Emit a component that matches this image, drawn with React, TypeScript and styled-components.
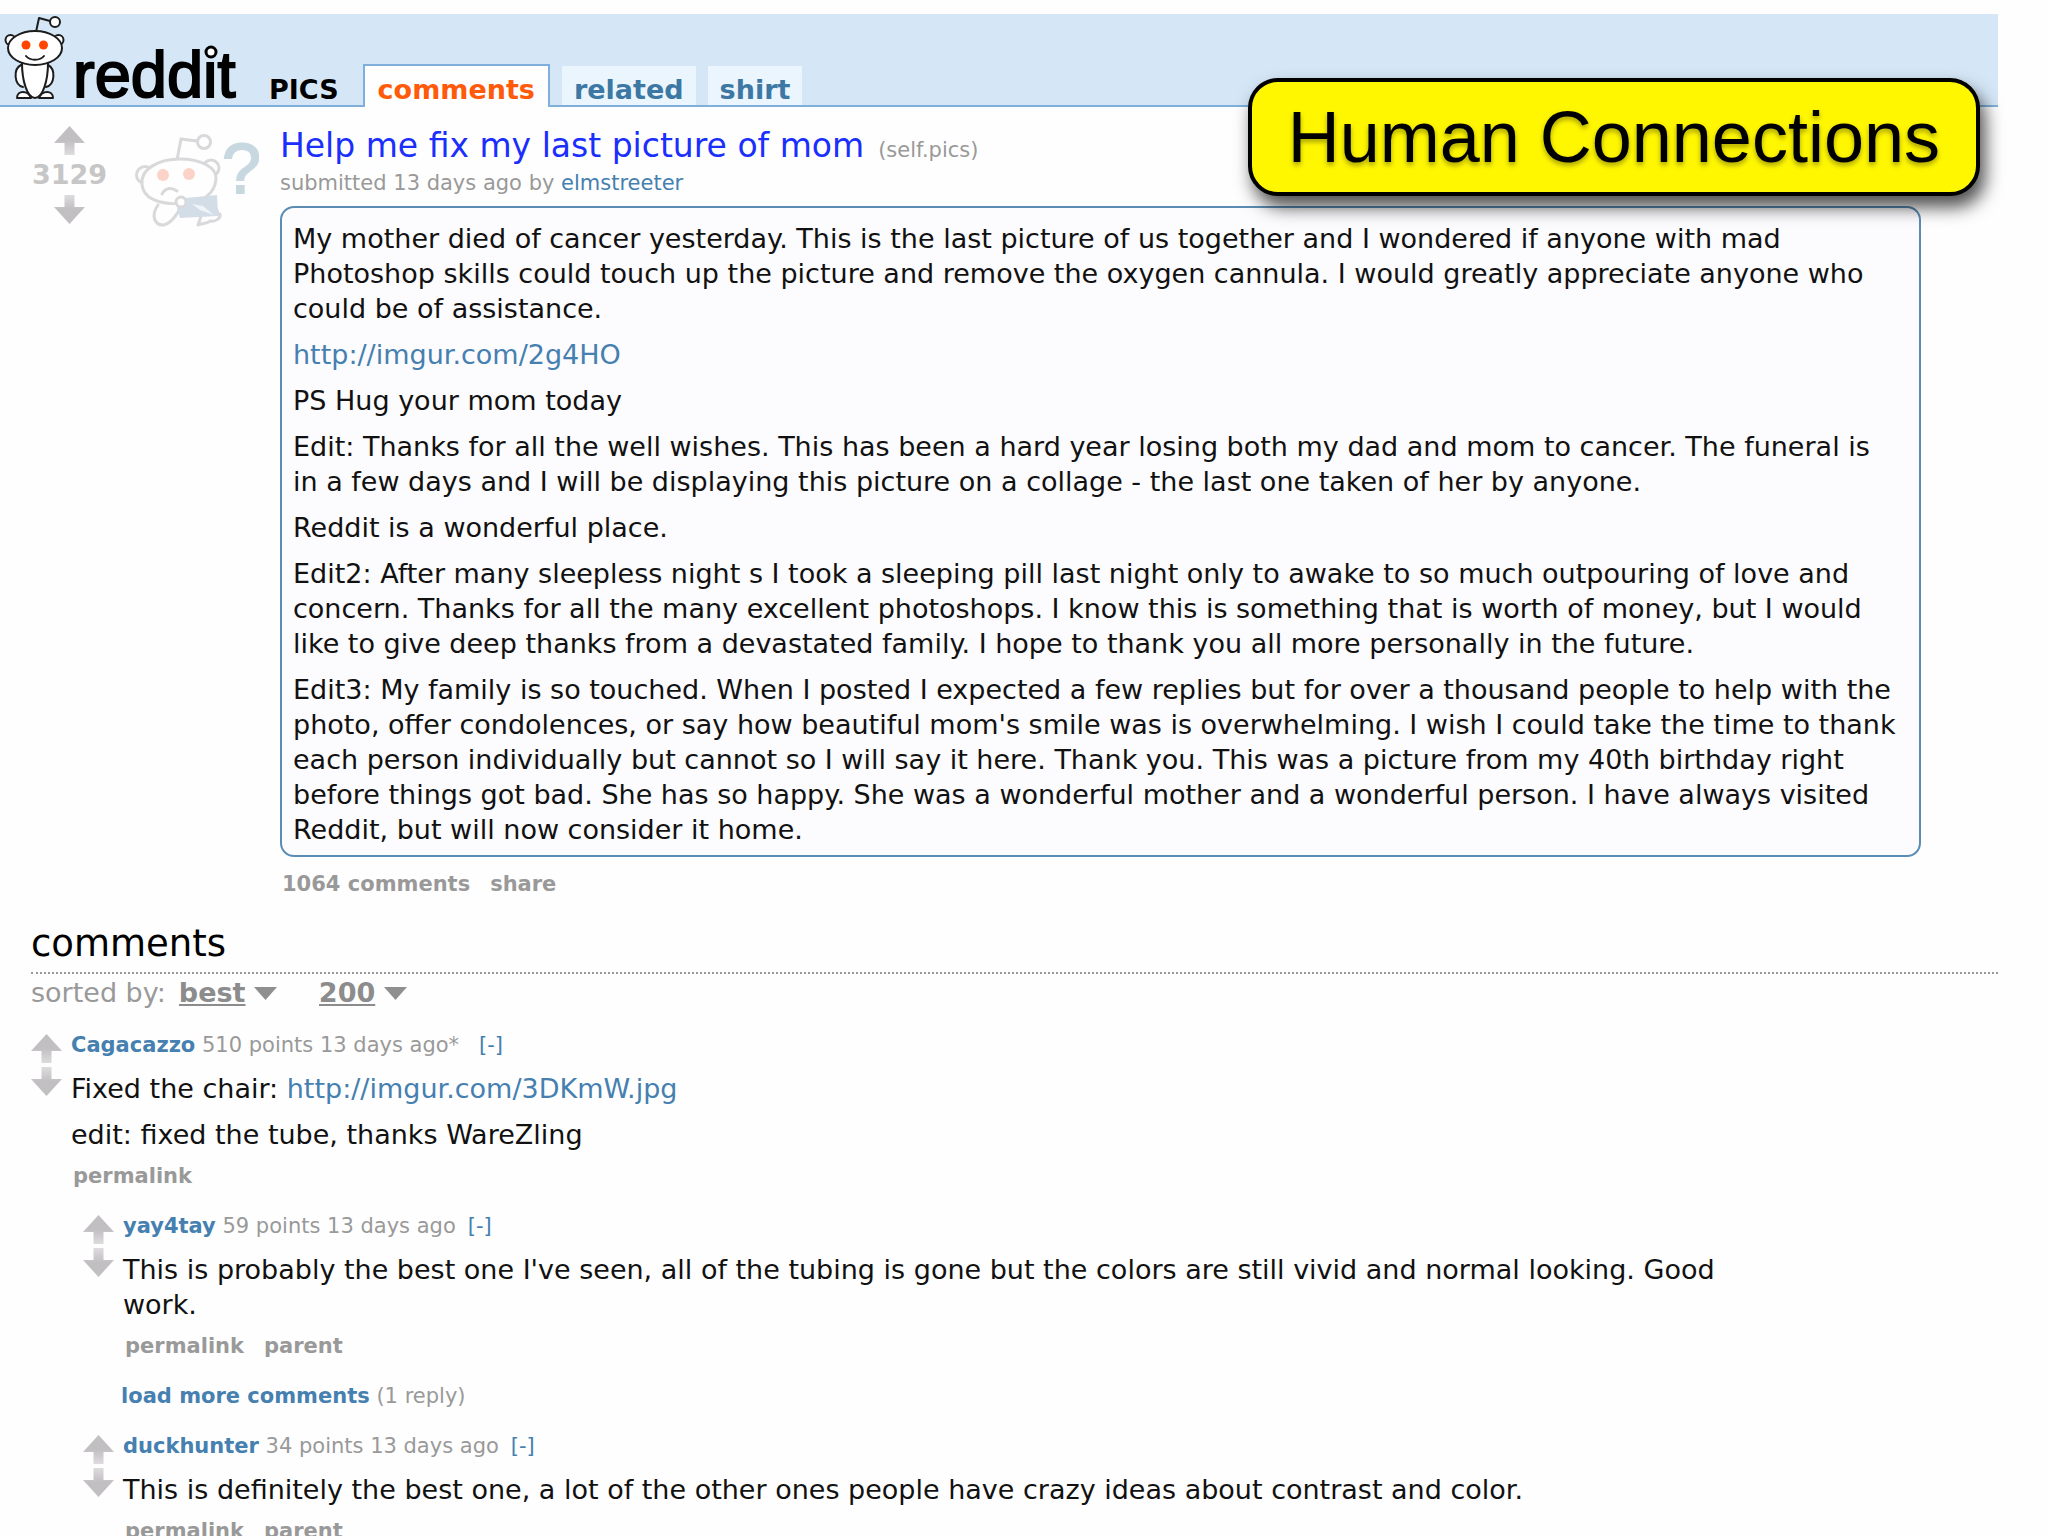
import React from "react";
import styled, { createGlobalStyle, css } from "styled-components";

const LINK = "#4580b0";
const MUTED = "#999999";

const GlobalStyle = createGlobalStyle`
  * { box-sizing: border-box; }
  body {
    margin: 0;
    background: #fefefe;
    color: #111;
    font-family: "DejaVu Sans", Verdana, sans-serif;
    font-size: 27px;
    line-height: 35px;
  }
  h1, h2, p, ul { margin: 0; padding: 0; font-weight: normal; }
  button { border: 0; padding: 0; background: none; font: inherit; cursor: pointer; }
`;

const Page = styled.div`
  position: relative;
  height: 100vh;
  overflow: hidden;
  padding: 14px 50px 0 0;
`;

const Header = styled.header`
  display: flex;
  align-items: flex-end;
  height: 93px;
  background: #d5e7f7;
  border-bottom: 2px solid #7fb0dc;
`;

const Logo = styled.a`
  display: flex;
  align-items: flex-end;
  width: 269px;
  height: 91px;
  color: #000;
  text-decoration: none;
`;

const Wordmark = styled.span`
  position: relative;
  font-family: "Liberation Sans", Arial, sans-serif;
  font-size: 65px;
  line-height: 60px;
  -webkit-text-stroke: 2px #000;
`;

const WordmarkDot = styled.svg`
  position: absolute;
  right: 18px;
  top: 0;
`;

const HeaderNav = styled.nav`
  display: flex;
  align-items: flex-end;
  gap: 12px;
  font-weight: bold;
  line-height: 31px;
`;

const SubredditName = styled.a`
  color: #000;
  text-decoration: none;
  margin-right: 12px;
`;

const Tab = styled.a<{ $active?: boolean }>`
  padding: 8px 12px 0;
  background: #ebf5fd;
  color: #3c78a3;
  text-decoration: none;
  ${(p) =>
    p.$active &&
    css`
      padding: 8px 13px 2px;
      margin-bottom: -2px;
      border: 2px solid #7fb0dc;
      border-bottom: 0;
      background: #fefefe;
      color: #ff5a0a;
    `}
`;

const Callout = styled.aside`
  position: absolute;
  top: 78px;
  right: 68px;
  padding: 0 36px;
  border: 4px solid #000;
  border-radius: 30px;
  background: #fff700;
  color: #000;
  font-family: "Liberation Sans", Helvetica, sans-serif;
  font-size: 72px;
  line-height: 110px;
  white-space: nowrap;
  text-shadow: 0 3px 5px rgba(0, 0, 0, 0.35);
  box-shadow: 5px 11px 18px rgba(0, 0, 0, 0.7);
`;

const Post = styled.article`
  display: flex;
  align-items: flex-start;
  padding: 19px 77px 0 31px;
`;

const PostVotes = styled.div`
  display: flex;
  flex-direction: column;
  align-items: center;
  width: 77px;
`;

const Score = styled.span`
  color: #c6c6c6;
  font-weight: bold;
  line-height: 40px;
`;

const VoteButton = styled.button`
  display: block;
  width: 31px;
  height: 29px;
  svg { display: block; }
`;

const Thumbnail = styled.a`
  flex: none;
  width: 124px;
  margin: 8px 21px 0 27px;
  svg { display: block; }
`;

const PostBody = styled.div`
  flex: 1;
  min-width: 0;
`;

const PostTitle = styled.h1`
  font-size: 33px;
  line-height: 40px;
  a { color: #1a2ffb; text-decoration: none; }
`;

const Domain = styled.span`
  margin-left: 14px;
  color: ${MUTED};
  font-size: 21px;
`;

const Small = styled.p`
  color: ${MUTED};
  font-size: 21px;
  line-height: 26px;
`;

const TextLink = styled.a<{ $bold?: boolean }>`
  color: ${LINK};
  font-weight: ${(p) => (p.$bold ? "bold" : "normal")};
  text-decoration: none;
`;

const Prose = styled.div`
  display: flex;
  flex-direction: column;
  gap: 11px;
`;

const SelfText = styled(Prose)`
  margin-top: 10px;
  padding: 13px 20px 8px 11px;
  border: 2px solid #5b8db4;
  border-radius: 14px;
  background: #fcfbfd;
`;

const ActionList = styled.ul`
  display: flex;
  gap: 20px;
  padding-left: 2px;
  list-style: none;
  font-size: 21px;
  font-weight: bold;
  line-height: 26px;
  a { color: ${MUTED}; text-decoration: none; }
`;

const PostActions = styled(ActionList)`
  margin-top: 14px;
`;

const Discussion = styled.section`
  margin: 25px 0 0 31px;
`;

const DiscussionTitle = styled.h2`
  padding-bottom: 6px;
  border-bottom: 2px dotted #999;
  color: #000;
  font-size: 37px;
  line-height: 44px;
`;

const SortBar = styled.div`
  display: flex;
  align-items: baseline;
  margin-top: 3px;
  color: ${MUTED};
  line-height: 32px;
`;

const SortField = styled.span`
  display: flex;
  align-items: center;
  gap: 8px;
  margin: 0 29px 0 13px;
`;

const SortSelect = styled.select`
  appearance: none;
  margin: 0;
  padding: 0;
  border: 0;
  background: none;
  color: #8c8c8c;
  font: inherit;
  font-weight: bold;
  text-decoration: underline 2px;
  text-underline-offset: 2px;
`;

const CommentRow = styled.article`
  display: flex;
  align-items: flex-start;
  gap: 9px;
`;

const CommentVotes = styled.div`
  display: flex;
  flex-direction: column;
  gap: 4px;
  padding-top: 2px;
`;

const CommentBody = styled.div`
  flex: 1;
  min-width: 0;
`;

const CommentText = styled(Prose)`
  max-width: 1650px;
  margin: 13px 0 11px;
`;

const CollapseButton = styled.button<{ $spaced?: boolean }>`
  margin-left: ${(p) => (p.$spaced ? 20 : 12)}px;
  color: ${LINK};
`;

const Thread = styled.div`
  margin-top: 23px;
`;

const Replies = styled.div`
  display: flex;
  flex-direction: column;
  gap: 24px;
  margin-top: 24px;
  padding-left: 12px;
`;

const LoadMore = styled(Small)`
  padding-left: 38px;
`;

const VoteArrow = ({ down }: { down?: boolean }) => (
  <svg width="31" height="29" viewBox="0 0 31 29" aria-hidden="true">
    <defs>
      <linearGradient id="arrowFade" x1="0" y1="0" x2="0" y2="1">
        <stop offset="0.5" stopColor="#c1bfc2" />
        <stop offset="1" stopColor="#dddbde" />
      </linearGradient>
    </defs>
    <path
      d="M15.500 0 L31 17 H20.500 V29 H10.500 V17 H0 Z"
      fill="url(#arrowFade)"
      transform={down ? "rotate(180 15.500 14.500)" : undefined}
    />
  </svg>
);

const Caret = () => (
  <svg width="23" height="13" viewBox="0 0 23 13" aria-hidden="true">
    <path d="M0 0 H23 L11.500 13 Z" fill="#8f8f8f" />
  </svg>
);

const AlienLogo = () => (
  <svg width="73" height="91" viewBox="0 14 73 91" aria-hidden="true">
    <g fill="#fff" stroke="#1c1c1c" strokeWidth="2" strokeLinecap="round" strokeLinejoin="round">
      <path d="M36 32 L39 18 L50 21" fill="none" />
      <circle cx="55" cy="22" r="5" />
      <circle cx="10.500" cy="40" r="5" />
      <circle cx="58.500" cy="40" r="5" />
      <path d="M21 65 C13 69 14 85 23 87" />
      <path d="M48 65 C56 69 55 85 46 87" />
      <path d="M17 98 C17 90 28 90 31 98 Z" />
      <path d="M39 98 C42 90 53 90 53 98 Z" />
      <path d="M22 63 C22 80 27 98 35 98 C43 98 48 80 48 63 Z" />
      <ellipse cx="35" cy="48" rx="27" ry="17" />
      <path d="M26 56 C30 61 40 61 44 56" fill="none" />
    </g>
    <circle cx="26" cy="45" r="4.500" fill="#ff4500" />
    <circle cx="43.500" cy="45" r="4.500" fill="#ff4500" />
  </svg>
);

const ConfusedAlien = () => (
  <svg width="124" height="93" viewBox="135 133 124 93" role="img" aria-label="self post">
    <g fill="#fefefe" stroke="#d9d8da" strokeWidth="3" strokeLinecap="round" strokeLinejoin="round">
      <path d="M177 159 L181 138 L197 140" fill="none" />
      <circle cx="204" cy="141" r="6.500" />
      <circle cx="145" cy="174" r="8.500" />
      <circle cx="211" cy="167" r="8" />
      <path d="M142 184 C140 167 160 158 180 158 C200 158 217 166 216 178 C215 192 203 203 180 203 C160 203 144 199 142 184 Z" />
      <path d="M162 193 C165 187 171 186 177 190" fill="none" />
      <path d="M158 204 C151 214 154 224 163 224 C172 223 178 212 182 204" />
      <path d="M201 215 L198 224 C203 221 206 224 210 220 C216 221 221 217 220 213 C216 215 219 208 215 207" />
    </g>
    <path d="M186 197 L217 194 L218 215 L180 217 L177 207 Z" fill="#d3dde8" />
    <path d="M192 203 L203 205 L214 214 L200 209 Z" fill="#eef4f8" />
    <circle cx="181" cy="201" r="5" fill="#fefefe" stroke="#d9d8da" strokeWidth="3" />
    <circle cx="163" cy="174" r="6" fill="#fbd3c8" />
    <circle cx="189" cy="173" r="6" fill="#fbd3c8" />
    <text x="224" y="192" fill="#c8d8e0" stroke="#c8d8e0" strokeWidth="2" fontFamily="Liberation Sans, sans-serif" fontSize="70" textAnchor="start" dx="-2">?</text>
  </svg>
);

type CommentProps = {
  author: string;
  meta: string;
  edited?: boolean;
  actions: string[];
  replies?: React.ReactNode;
  children: React.ReactNode;
};

const Actions = ({ items }: { items: string[] }) => (
  <ActionList>
    {items.map((item) => (
      <li key={item}>
        <a href="#">{item}</a>
      </li>
    ))}
  </ActionList>
);

const Comment = ({ author, meta, edited, actions, replies, children }: CommentProps) => (
  <CommentRow>
    <CommentVotes>
      <VoteButton type="button" aria-label="upvote"><VoteArrow /></VoteButton>
      <VoteButton type="button" aria-label="downvote"><VoteArrow down /></VoteButton>
    </CommentVotes>
    <CommentBody>
      <Small>
        <TextLink href="#" $bold>{author}</TextLink> {meta}
        <CollapseButton type="button" $spaced={edited}>[-]</CollapseButton>
      </Small>
      <CommentText>{children}</CommentText>
      <Actions items={actions} />
      {replies && <Replies>{replies}</Replies>}
    </CommentBody>
  </CommentRow>
);

const SortControl = ({ label, value }: { label: string; value: string }) => (
  <SortField>
    <SortSelect aria-label={label} defaultValue={value}>
      <option>{value}</option>
    </SortSelect>
    <Caret />
  </SortField>
);

export default function App() {
  return (
    <Page>
      <GlobalStyle />
      <Header>
        <Logo href="#">
          <AlienLogo />
          <Wordmark>
            reddit
            <WordmarkDot width="14" height="14" viewBox="0 0 14 14" aria-hidden="true">
              <rect width="14" height="14" fill="#d5e7f7" />
              <circle cx="7" cy="7" r="5" fill="#fff" stroke="#000" strokeWidth="3" />
            </WordmarkDot>
          </Wordmark>
        </Logo>
        <HeaderNav>
          <SubredditName href="#">PICS</SubredditName>
          <Tab href="#" $active>comments</Tab>
          <Tab href="#">related</Tab>
          <Tab href="#">shirt</Tab>
        </HeaderNav>
      </Header>

      <Post>
        <PostVotes>
          <VoteButton type="button" aria-label="upvote"><VoteArrow /></VoteButton>
          <Score>3129</Score>
          <VoteButton type="button" aria-label="downvote"><VoteArrow down /></VoteButton>
        </PostVotes>
        <Thumbnail href="#"><ConfusedAlien /></Thumbnail>
        <PostBody>
          <PostTitle>
            <a href="#">Help me fix my last picture of mom</a>
            <Domain>(self.pics)</Domain>
          </PostTitle>
          <Small>
            submitted 13 days ago by <TextLink href="#">elmstreeter</TextLink>
          </Small>
          <SelfText>
            <p>
              My mother died of cancer yesterday. This is the last picture of us together and I wondered if anyone with mad
              Photoshop skills could touch up the picture and remove the oxygen cannula. I would greatly appreciate anyone
              who could be of assistance.
            </p>
            <p><TextLink href="#">http://imgur.com/2g4HO</TextLink></p>
            <p>PS Hug your mom today</p>
            <p>
              Edit: Thanks for all the well wishes. This has been a hard year losing both my dad and mom to cancer. The
              funeral is in a few days and I will be displaying this picture on a collage - the last one taken of her by
              anyone.
            </p>
            <p>Reddit is a wonderful place.</p>
            <p>
              Edit2: After many sleepless night s I took a sleeping pill last night only to awake to so much outpouring of
              love and concern. Thanks for all the many excellent photoshops. I know this is something that is worth of
              money, but I would like to give deep thanks from a devastated family. I hope to thank you all more personally
              in the future.
            </p>
            <p>
              Edit3: My family is so touched. When I posted I expected a few replies but for over a thousand people to help
              with the photo, offer condolences, or say how beautiful mom's smile was is overwhelming. I wish I could take
              the time to thank each person individually but cannot so I will say it here. Thank you. This was a picture
              from my 40th birthday right before things got bad. She has so happy. She was a wonderful mother and a
              wonderful person. I have always visited Reddit, but will now consider it home.
            </p>
          </SelfText>
          <PostActions>
            <li><a href="#">1064 comments</a></li>
            <li><a href="#">share</a></li>
          </PostActions>
        </PostBody>
      </Post>

      <Discussion>
        <DiscussionTitle>comments</DiscussionTitle>
        <SortBar>
          <span>sorted by:</span>
          <SortControl label="sorted by" value="best" />
          <SortControl label="number of comments" value="200" />
        </SortBar>
        <Thread>
          <Comment
            author="Cagacazzo"
            meta="510 points 13 days ago*"
            edited
            actions={["permalink"]}
            replies={
              <>
                <Comment author="yay4tay" meta="59 points 13 days ago" actions={["permalink", "parent"]}>
                  <p>
                    This is probably the best one I've seen, all of the tubing is gone but the colors are still vivid and
                    normal looking. Good work.
                  </p>
                </Comment>
                <LoadMore>
                  <TextLink href="#" $bold>load more comments</TextLink> (1 reply)
                </LoadMore>
                <Comment author="duckhunter" meta="34 points 13 days ago" actions={["permalink", "parent"]}>
                  <p>
                    This is definitely the best one, a lot of the other ones people have crazy ideas about contrast and
                    color.
                  </p>
                </Comment>
              </>
            }
          >
            <p>
              Fixed the chair: <TextLink href="#">http://imgur.com/3DKmW.jpg</TextLink>
            </p>
            <p>edit: fixed the tube, thanks WareZling</p>
          </Comment>
        </Thread>
      </Discussion>
      <Callout>Human Connections</Callout>
    </Page>
  );
}
